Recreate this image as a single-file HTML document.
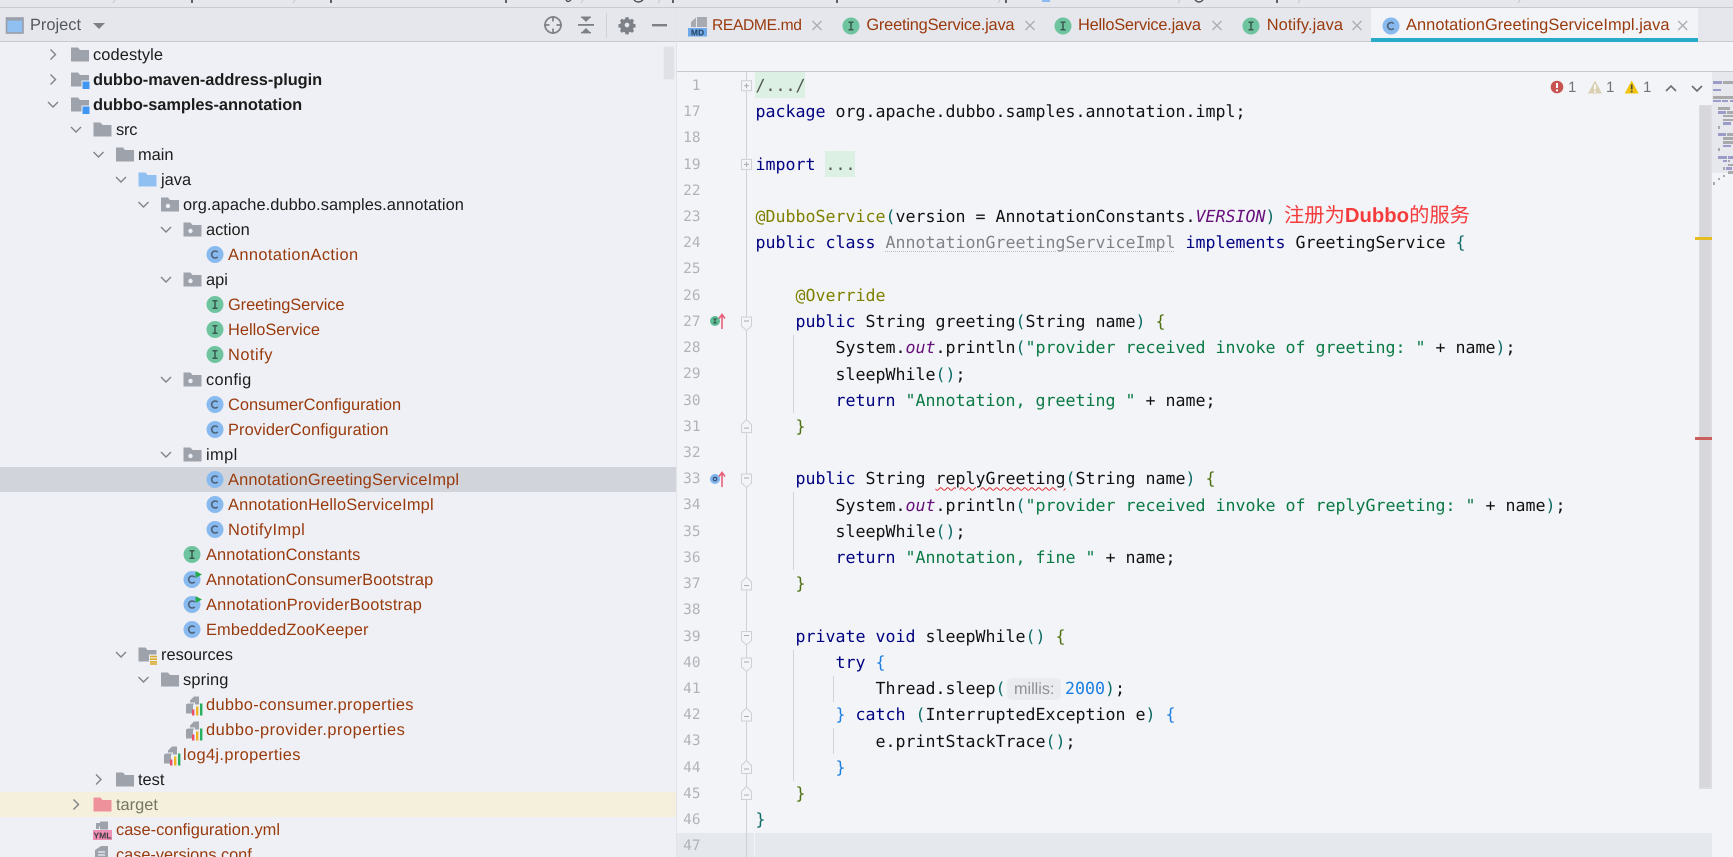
<!DOCTYPE html>
<html lang="en">
<head>
<meta charset="utf-8">
<title>AnnotationGreetingServiceImpl.java</title>
<style>
html,body{margin:0;padding:0;width:1733px;height:857px;overflow:hidden;background:#f2f4f8}
body{position:relative;font-family:"Liberation Sans","Noto Sans CJK SC",sans-serif;text-rendering:geometricPrecision}
.box{position:absolute}
.t{position:absolute;height:25px;line-height:25px;font-size:16.4px;white-space:pre;color:#1c1c1c;margin-top:1px}
.o{color:#993a0d}
.b{font-weight:bold}
.tab{position:absolute;top:13px;height:25px;line-height:25px;font-size:16.4px;white-space:pre;color:#993a0d}
.c{position:absolute;left:755.5px;height:26.22px;line-height:26.22px;font-family:"DejaVu Sans Mono",monospace;font-size:16.62px;white-space:pre;color:#111;margin-top:.6px}
.n{position:absolute;right:1032.5px;height:26.22px;line-height:26.22px;font-family:"DejaVu Sans Mono",monospace;font-size:14.4px;color:#b0b3b8;margin-top:.4px}
.k{color:#000080}.s{color:#0b7a45}.a{color:#808000}.i{color:#660e7a;font-style:italic}
.p{color:#0e6b66}.g{color:#4f7010}.u{color:#1d7fe0}.d{color:#7f8287;text-decoration:underline dotted #b9bbbf 1px;text-underline-offset:3px}
.w{text-decoration:underline wavy #e03030 1px;text-underline-offset:2px}
</style>
</head>
<body>
<!-- backgrounds -->
<div class="box" style="left:0;top:0;width:1733px;height:7px;background:#e6e7ec"></div>
<div class="box" style="left:0;top:7px;width:1733px;height:1px;background:#c8cacf"></div>
<div class="box" style="left:0;top:8px;width:1733px;height:33px;background:#e6e7ec"></div>
<div class="box" style="left:0;top:41px;width:1733px;height:1px;background:#c8cacf"></div>
<div class="box" style="left:0;top:42px;width:676px;height:815px;background:#eff0f5"></div>
<div class="box" style="left:676px;top:8px;width:1px;height:849px;background:#e1e3e8"></div>
<div class="box" style="left:0;top:467px;width:676px;height:25px;background:#d1d5db"></div>
<div class="box" style="left:0;top:792px;width:676px;height:25px;background:#f4f0dc"></div>
<div class="box" style="left:663px;top:46px;width:12px;height:34px;background:#dfe1e6;border:1px solid #e9ebee;box-sizing:border-box"></div>
<div class="box" style="left:677px;top:71px;width:1056px;height:1px;background:#c8cacf"></div>
<div class="box" style="left:1371px;top:8px;width:327px;height:30px;background:#f2f4f8"></div>
<div class="box" style="left:1371px;top:38px;width:327px;height:4px;background:#28aac9"></div>
<div class="box" style="left:677px;top:833px;width:1035px;height:24px;background:#e5e9ed"></div>
<div class="box" style="left:1712px;top:72px;width:21px;height:101px;background:#e7e8ed"></div>
<div class="box" style="left:1699px;top:105px;width:13px;height:684px;background:#d6d6db;border:1px solid #dcdde1;border-right-width:2px;border-bottom-width:2px;box-sizing:border-box"></div>
<div class="box" style="left:1695px;top:237px;width:17px;height:3px;background:#e3bd22"></div>
<div class="box" style="left:1695px;top:437px;width:17px;height:3px;background:#c9605c"></div>
<!-- fold highlights -->
<div class="box" style="left:755px;top:72px;width:50px;height:26px;background:#dcf0e3"></div>
<div class="box" style="left:825px;top:151px;width:30px;height:26px;background:#dcf0e3"></div>
<!-- indent guides -->
<div class="box" style="left:793px;top:335px;width:1px;height:78px;background:#d2d4d8"></div>
<div class="box" style="left:793px;top:492px;width:1px;height:78px;background:#d2d4d8"></div>
<div class="box" style="left:793px;top:650px;width:1px;height:131px;background:#d2d4d8"></div>
<div class="box" style="left:833px;top:676px;width:1px;height:26px;background:#d2d4d8"></div>
<div class="box" style="left:833px;top:728px;width:1px;height:26px;background:#d2d4d8"></div>
<div class="box" style="left:746px;top:72px;width:1px;height:785px;background:#ced1d5"></div>
<div class="box" style="left:754px;top:833px;width:1px;height:24px;background:#f2f4f8"></div>
<div class="box" style="left:1007px;top:678px;width:54px;height:22px;border-radius:5px;background:#e9ebef"></div>

<!-- icons layer -->
<svg class="box" style="left:0;top:0" width="1733" height="857" viewBox="0 0 1733 857" xmlns="http://www.w3.org/2000/svg">
<defs>
<g id="cr"><path d="M-2.5 -5L2.5 0L-2.5 5" fill="none" stroke="#7f8287" stroke-width="1.4"/></g>
<g id="cd"><path d="M-5 -2.5L0 2.5L5 -2.5" fill="none" stroke="#7f8287" stroke-width="1.4"/></g>
<g id="f"><path d="M0 2H7L9 4.5H18V16H0z" fill="#9ea2ab"/></g>
<g id="jf"><path d="M0 2H7L9 4.5H18V16H0z" fill="#90bff2"/></g>
<g id="tf"><path d="M0 2H7L9 4.5H18V16H0z" fill="#ee919a"/></g>
<g id="pk"><use href="#f"/><circle cx="7" cy="10.5" r="2.2" fill="#eff0f5"/></g>
<g id="m"><use href="#f"/><rect x="10.5" y="10" width="8" height="8.5" fill="#eff0f5"/><rect x="11.5" y="11" width="7" height="7.5" fill="#3f97f2"/></g>
<g id="res"><use href="#f"/><rect x="10.5" y="9" width="8" height="10" fill="#eff0f5"/><path d="M11.5 11h7M11.5 13.7h7M11.5 16.4h7M11.5 18.5h7" stroke="#d9a92a" stroke-width="1.6"/></g>
<g id="cl"><circle cx="8.5" cy="9" r="8.5" fill="#88baf0"/><path d="M11.2 6.6A3.5 3.5 0 1 0 11.2 11.4" fill="none" stroke="#4e6278" stroke-width="1.6"/></g>
<g id="in"><circle cx="8.5" cy="9" r="8.5" fill="#6fc4a0"/><path d="M6 5.2h5M8.5 5.2v7.6M6 12.8h5" fill="none" stroke="#3a5a4e" stroke-width="1.5"/></g>
<g id="run"><use href="#cl"/><path d="M12 0.5L18.5 4L12 7.5z" fill="#25a94f"/></g>
<g id="prop"><path d="M1 9V18H9V8H3z" fill="#9ea2ab"/><path d="M5 5L9 1H10V7H5z" fill="#9ea2ab"/><path d="M10 1h4v8h-4z" fill="#9ea2ab"/><rect x="8" y="9" width="11" height="11" fill="#eff0f5"/><rect x="7" y="14" width="2.4" height="6" fill="#e8506a"/><rect x="11" y="11" width="2.4" height="9" fill="#eeb422"/><rect x="15" y="8" width="2.4" height="12" fill="#27ae60"/></g>
<g id="x"><path d="M-4.5 -4.5L4.5 4.5M4.5 -4.5L-4.5 4.5" stroke="#a9acb1" stroke-width="1.3"/></g>
<g id="fo"><path d="M-5 -5H5V4L0 8.5L-5 4z" fill="#f2f4f8" stroke="#cdd0d4"/><path d="M-2.5 -1H2.5" stroke="#a9acb1"/></g>
<g id="fc"><path d="M-5 -2L0 -7L5 -2V6H-5z" fill="#f2f4f8" stroke="#cdd0d4"/><path d="M-2.5 1.5H2.5" stroke="#a9acb1"/></g>
<g id="fp"><rect x="-5" y="-5" width="10" height="10" fill="#f2f4f8" stroke="#cdd0d4"/><path d="M-2.5 0H2.5M0 -2.5V2.5" stroke="#a9acb1"/></g>
</defs>

<!-- top strip cut off glyph remnants -->
<path d="M115 0L113 3M295 0L293 3M583 0L581 3M660 0L658 3M1000 0L998 3M1180 0L1178 3M1300 0L1298 3M1520 0L1518 3" stroke="#c3c5ca" stroke-width="1"/>
<path d="M192 0V3M331 0V3M506 0V3M673 0V3M837 0V3M1006 0V3M1277 0V3" stroke="#333" stroke-width="1.5"/>
<path d="M566 0Q568 3 571 0M634 0Q638 4 643 0M1195 0Q1199 4 1203 0" fill="none" stroke="#444" stroke-width="1.2"/>
<rect x="1042" y="0" width="8" height="2" fill="#8dbdf0"/>

<!-- project header -->
<rect x="6.5" y="18" width="16.5" height="15" fill="#90bff2" stroke="#9a9ea6" stroke-width="1.6"/>
<path d="M7 19h15v1.6H7z" fill="#9a9ea6"/>
<path d="M93 23H105L99 29z" fill="#7c8086"/>
<g fill="none" stroke="#7d8187" stroke-width="1.7"><circle cx="553" cy="25" r="8"/><path d="M553 16V21.5M553 28.5V34M544 25H549.5M556.5 25H562"/></g>
<g fill="#7d8187"><rect x="578" y="24" width="16" height="1.8"/><path d="M581.5 17.5H590.5L586 22z"/><path d="M581.5 32.5H590.5L586 28z"/><rect x="581" y="16.5" width="10" height="1.4"/><rect x="581" y="32" width="10" height="1.4"/></g>
<rect x="606" y="13" width="1" height="25" fill="#d0d2d6"/>
<path fill="#7d8187" fill-rule="evenodd" transform="translate(627 25) scale(.78) translate(-627 -27)" d="M625 17h4l.5 2.5 1.8.8 2.2-1.4 2.6 2.6-1.4 2.2.8 1.8 2.5.5v4l-2.5.5-.8 1.8 1.4 2.2-2.6 2.6-2.2-1.4-1.8.8-.5 2.5h-4l-.5-2.5-1.8-.8-2.2 1.4-2.6-2.6 1.4-2.2-.8-1.8-2.5-.5v-4l2.5-.5.8-1.8-1.4-2.2 2.6-2.6 2.2 1.4 1.8-.8zM627 24a3 3 0 1 0 .01 0z"/>
<rect x="652" y="24" width="15" height="2.4" fill="#7d8187"/>

<!-- tree chevrons -->
<use href="#cr" x="53" y="54.5"/>
<use href="#cr" x="53" y="79.5"/>
<use href="#cd" x="53" y="104.5"/>
<use href="#cd" x="76" y="129.5"/>
<use href="#cd" x="98.5" y="154.5"/>
<use href="#cd" x="121" y="179.5"/>
<use href="#cd" x="143.5" y="204.5"/>
<use href="#cd" x="166" y="229.5"/>
<use href="#cd" x="166" y="279.5"/>
<use href="#cd" x="166" y="379.5"/>
<use href="#cd" x="166" y="454.5"/>
<use href="#cd" x="121" y="654.5"/>
<use href="#cd" x="143.5" y="679.5"/>
<use href="#cr" x="98.5" y="779.5"/>
<use href="#cr" x="76" y="804.5"/>

<!-- tree icons -->
<use href="#f" x="71" y="45.5"/>
<use href="#m" x="71" y="70.5"/>
<use href="#m" x="71" y="95.5"/>
<use href="#f" x="93.5" y="120.5"/>
<use href="#f" x="116" y="145.5"/>
<use href="#jf" x="138.5" y="170.5"/>
<use href="#pk" x="161" y="195.5"/>
<use href="#pk" x="183.5" y="220.5"/>
<use href="#cl" x="206.5" y="245.5"/>
<use href="#pk" x="183.5" y="270.5"/>
<use href="#in" x="206.5" y="295.5"/>
<use href="#in" x="206.5" y="320.5"/>
<use href="#in" x="206.5" y="345.5"/>
<use href="#pk" x="183.5" y="370.5"/>
<use href="#cl" x="206.5" y="395.5"/>
<use href="#cl" x="206.5" y="420.5"/>
<use href="#pk" x="183.5" y="445.5"/>
<use href="#cl" x="206.5" y="470.5"/>
<use href="#cl" x="206.5" y="495.5"/>
<use href="#cl" x="206.5" y="520.5"/>
<use href="#in" x="183.5" y="545.5"/>
<use href="#run" x="183.5" y="570.5"/>
<use href="#run" x="183.5" y="595.5"/>
<use href="#cl" x="183.5" y="620.5"/>
<use href="#res" x="138.5" y="645.5"/>
<use href="#f" x="161" y="670.5"/>
<use href="#prop" x="185" y="695.5"/>
<use href="#prop" x="185" y="720.5"/>
<use href="#prop" x="163" y="745.5"/>
<use href="#f" x="116" y="770.5"/>
<use href="#tf" x="93.5" y="795.5"/>
<!-- yml -->
<path d="M96 829V823H103L99 827V829z" fill="#9ea2ab"/><rect x="100" y="821.5" width="8" height="8" fill="#9ea2ab"/>
<rect x="93" y="830" width="19" height="10" fill="#f08fb6"/>
<text x="102.5" y="838.5" text-anchor="middle" font-family="Liberation Sans, sans-serif" font-size="8.5" font-weight="bold" fill="#3b3b3b">YML</text>
<!-- conf -->
<path d="M95 857V850L101 846H108V857z" fill="#9ea2ab"/><path d="M98 852H105M98 855H105" stroke="#eff0f5" stroke-width="1.2"/>

<!-- tab icons -->
<path d="M691 27V22L696 17.5V27z" fill="#a7aab0"/><rect x="697" y="17" width="10" height="10" fill="#a7aab0"/>
<rect x="688" y="28" width="19" height="8.5" fill="#6fa9ea"/>
<text x="697.5" y="35.5" text-anchor="middle" font-family="Liberation Sans, sans-serif" font-size="8.5" font-weight="bold" fill="#24405c">MD</text>
<use href="#in" x="842.5" y="17"/>
<use href="#in" x="1054.5" y="17"/>
<use href="#in" x="1242.5" y="17"/>
<use href="#cl" x="1382.5" y="17"/>
<use href="#x" x="817" y="25.5"/>
<use href="#x" x="1030" y="25.5"/>
<use href="#x" x="1217" y="25.5"/>
<use href="#x" x="1357" y="25.5"/>
<use href="#x" x="1682.7" y="25.5"/>

<!-- inspections -->
<circle cx="1557" cy="87" r="6.3" fill="#c75450"/><path d="M1557 83V88" stroke="#fff" stroke-width="2"/><circle cx="1557" cy="90.4" r="1.1" fill="#fff"/>
<path d="M1595 80.5L1602 93.5H1588z" fill="#d9d0b3"/><path d="M1595 84.5V89.5M1595 90.7V92.4" stroke="#fff" stroke-width="1.7"/>
<path d="M1631.7 80.5L1638.7 93.5H1624.7z" fill="#f2c40f"/><path d="M1631.7 84.5V89.5M1631.7 90.7V92.4" stroke="#4b4b3b" stroke-width="1.7"/>
<path d="M1666 91L1671 86L1676 91M1692 86L1697 91L1702 86" fill="none" stroke="#6a6e73" stroke-width="1.6"/>

<!-- gutter icons -->
<circle cx="715" cy="321" r="5" fill="#5fbb95"/><path d="M713.3 319H716.7M715 319V323M713.3 323H716.7" stroke="#2c4a3f" stroke-width="1"/>
<path d="M722 329V315M719 318.5L722 314.5L725 318.5" fill="none" stroke="#e8607a" stroke-width="1.6"/>
<circle cx="715" cy="479" r="5" fill="#7fb3ee"/><circle cx="715" cy="479" r="1.8" fill="none" stroke="#2c3f55" stroke-width="1"/>
<path d="M722 487V473M719 476.5L722 472.5L725 476.5" fill="none" stroke="#e8607a" stroke-width="1.6"/>

<!-- fold marks -->
<use href="#fp" x="746.5" y="85.7"/>
<use href="#fp" x="746.5" y="164.4"/>
<use href="#fo" x="746.5" y="322"/>
<use href="#fc" x="746.5" y="426.6"/>
<use href="#fo" x="746.5" y="479"/>
<use href="#fc" x="746.5" y="584"/>
<use href="#fo" x="746.5" y="636.5"/>
<use href="#fo" x="746.5" y="663"/>
<use href="#fc" x="746.5" y="715"/>
<use href="#fc" x="746.5" y="767.5"/>
<use href="#fc" x="746.5" y="793.5"/>

<!-- minimap -->
<g fill="#9c9cc9">
<rect x="1713" y="81" width="9" height="3"/><rect x="1713" y="89" width="8" height="2"/>
<rect x="1713" y="100" width="8" height="2"/><rect x="1722" y="100" width="6" height="2"/><rect x="1730" y="100" width="3" height="2"/>
<rect x="1718" y="111" width="8" height="3"/><rect x="1723" y="122" width="8" height="3"/>
<rect x="1718" y="133" width="8" height="3"/><rect x="1723" y="145" width="8" height="2"/>
<rect x="1718" y="156" width="9" height="3"/><rect x="1728" y="156" width="5" height="3"/>
<rect x="1723" y="160" width="4" height="2"/><rect x="1726" y="167" width="6" height="3"/>
</g>
<g fill="#a9a9ab">
<rect x="1723" y="81" width="10" height="3"/><rect x="1713" y="96" width="20" height="3"/>
<rect x="1718" y="107" width="12" height="3"/><rect x="1727" y="111" width="6" height="3"/>
<rect x="1723" y="115" width="10" height="2"/><rect x="1723" y="119" width="10" height="2"/>
<rect x="1718" y="126" width="2" height="3"/><rect x="1727" y="133" width="6" height="3"/>
<rect x="1723" y="137" width="10" height="3"/><rect x="1723" y="141" width="10" height="3"/>
<rect x="1718" y="148" width="2" height="3"/><rect x="1728" y="160" width="2" height="2"/>
<rect x="1728" y="164" width="5" height="2"/><rect x="1723" y="167" width="2" height="3"/>
<rect x="1728" y="171" width="5" height="3"/><rect x="1723" y="175" width="2" height="2"/>
<rect x="1718" y="178" width="2" height="2"/><rect x="1713" y="182" width="2" height="3"/>
</g>
</svg>

<!-- header text -->
<div class="t" style="left:30px;top:12px;color:#54585f">Project</div>

<!-- tabs -->
<div class="tab" style="left:712px;font-size:15.6px;letter-spacing:-.35px">README.md</div>
<div class="tab" style="left:866.4px;letter-spacing:-.21px">GreetingService.java</div>
<div class="tab" style="left:1078px;letter-spacing:-.23px">HelloService.java</div>
<div class="tab" style="left:1266.7px;letter-spacing:.1px">Notify.java</div>
<div class="tab" style="left:1406px;letter-spacing:.06px">AnnotationGreetingServiceImpl.java</div>

<!-- tree -->
<div class="t" style="left:93px;top:42px;letter-spacing:.1px">codestyle</div>
<div class="t b" style="left:93px;top:67px;letter-spacing:-.05px">dubbo-maven-address-plugin</div>
<div class="t b" style="left:93px;top:92px;letter-spacing:-.05px">dubbo-samples-annotation</div>
<div class="t" style="left:116px;top:117px;letter-spacing:-.2px">src</div>
<div class="t" style="left:138px;top:142px">main</div>
<div class="t" style="left:161px;top:167px">java</div>
<div class="t" style="left:183px;top:192px;letter-spacing:.06px">org.apache.dubbo.samples.annotation</div>
<div class="t" style="left:206px;top:217px">action</div>
<div class="t o" style="left:228px;top:242px;letter-spacing:.41px">AnnotationAction</div>
<div class="t" style="left:206px;top:267px">api</div>
<div class="t o" style="left:228px;top:292px;letter-spacing:-.07px">GreetingService</div>
<div class="t o" style="left:228px;top:317px">HelloService</div>
<div class="t o" style="left:228px;top:342px;letter-spacing:.5px">Notify</div>
<div class="t" style="left:206px;top:367px;letter-spacing:.3px">config</div>
<div class="t o" style="left:228px;top:392px">ConsumerConfiguration</div>
<div class="t o" style="left:228px;top:417px;letter-spacing:.1px">ProviderConfiguration</div>
<div class="t" style="left:206px;top:442px;letter-spacing:.4px">impl</div>
<div class="t o" style="left:228px;top:467px;letter-spacing:.15px">AnnotationGreetingServiceImpl</div>
<div class="t o" style="left:228px;top:492px;letter-spacing:.17px">AnnotationHelloServiceImpl</div>
<div class="t o" style="left:228px;top:517px;letter-spacing:.44px">NotifyImpl</div>
<div class="t o" style="left:206px;top:542px;letter-spacing:.12px">AnnotationConstants</div>
<div class="t o" style="left:206px;top:567px;letter-spacing:.12px">AnnotationConsumerBootstrap</div>
<div class="t o" style="left:206px;top:592px;letter-spacing:.24px">AnnotationProviderBootstrap</div>
<div class="t o" style="left:206px;top:617px;letter-spacing:.13px">EmbeddedZooKeeper</div>
<div class="t" style="left:161px;top:642px">resources</div>
<div class="t" style="left:183px;top:667px;letter-spacing:.15px">spring</div>
<div class="t o" style="left:206px;top:692px;letter-spacing:.33px">dubbo-consumer.properties</div>
<div class="t o" style="left:206px;top:717px;letter-spacing:.5px">dubbo-provider.properties</div>
<div class="t o" style="left:183px;top:742px;letter-spacing:.36px">log4j.properties</div>
<div class="t" style="left:138px;top:767px">test</div>
<div class="t" style="left:116px;top:792px;color:#75765f">target</div>
<div class="t o" style="left:116px;top:817px">case-configuration.yml</div>
<div class="t o" style="left:116px;top:842px;letter-spacing:-.05px">case-versions.conf</div>

<!-- line numbers -->
<div class="n" style="top:72.6px">1</div>
<div class="n" style="top:98.8px">17</div>
<div class="n" style="top:125px">18</div>
<div class="n" style="top:151.3px">19</div>
<div class="n" style="top:177.5px">22</div>
<div class="n" style="top:203.7px">23</div>
<div class="n" style="top:229.9px">24</div>
<div class="n" style="top:256.1px">25</div>
<div class="n" style="top:282.4px">26</div>
<div class="n" style="top:308.6px">27</div>
<div class="n" style="top:334.8px">28</div>
<div class="n" style="top:361px">29</div>
<div class="n" style="top:387.2px">30</div>
<div class="n" style="top:413.5px">31</div>
<div class="n" style="top:439.7px">32</div>
<div class="n" style="top:465.9px">33</div>
<div class="n" style="top:492.1px">34</div>
<div class="n" style="top:518.3px">35</div>
<div class="n" style="top:544.6px">36</div>
<div class="n" style="top:570.8px">37</div>
<div class="n" style="top:597px">38</div>
<div class="n" style="top:623.2px">39</div>
<div class="n" style="top:649.4px">40</div>
<div class="n" style="top:675.7px">41</div>
<div class="n" style="top:701.9px">42</div>
<div class="n" style="top:728.1px">43</div>
<div class="n" style="top:754.3px">44</div>
<div class="n" style="top:780.5px">45</div>
<div class="n" style="top:806.8px">46</div>
<div class="n" style="top:833px">47</div>

<!-- code -->
<div class="c" style="top:72.6px;color:#555">/.../</div>
<div class="c" style="top:98.8px"><span class="k">package</span> org.apache.dubbo.samples.annotation.impl;</div>
<div class="c" style="top:151.3px"><span class="k">import</span> <span style="color:#555">...</span></div>
<div class="c" style="top:203.7px"><span class="a">@DubboService</span><span class="p">(</span>version = AnnotationConstants.<span class="i">VERSION</span><span class="p">)</span></div>
<div class="c" style="top:229.9px"><span class="k">public class</span> <span class="d">AnnotationGreetingServiceImpl</span> <span class="k">implements</span> GreetingService <span class="p">{</span></div>
<div class="c" style="top:282.4px">    <span class="a">@Override</span></div>
<div class="c" style="top:308.6px">    <span class="k">public</span> String greeting<span class="p">(</span>String name<span class="p">)</span> <span class="g">{</span></div>
<div class="c" style="top:334.8px">        System.<span class="i">out</span>.println<span class="p">(</span><span class="s">"provider received invoke of greeting: "</span> + name<span class="p">)</span>;</div>
<div class="c" style="top:361px">        sleepWhile<span class="p">()</span>;</div>
<div class="c" style="top:387.2px">        <span class="k">return</span> <span class="s">"Annotation, greeting "</span> + name;</div>
<div class="c" style="top:413.5px">    <span class="g">}</span></div>
<div class="c" style="top:465.9px">    <span class="k">public</span> String <span class="w">replyGreeting</span><span class="p">(</span>String name<span class="p">)</span> <span class="g">{</span></div>
<div class="c" style="top:492.1px">        System.<span class="i">out</span>.println<span class="p">(</span><span class="s">"provider received invoke of replyGreeting: "</span> + name<span class="p">)</span>;</div>
<div class="c" style="top:518.3px">        sleepWhile<span class="p">()</span>;</div>
<div class="c" style="top:544.6px">        <span class="k">return</span> <span class="s">"Annotation, fine "</span> + name;</div>
<div class="c" style="top:570.8px">    <span class="g">}</span></div>
<div class="c" style="top:623.2px">    <span class="k">private void</span> sleepWhile<span class="p">()</span> <span class="g">{</span></div>
<div class="c" style="top:649.4px">        <span class="k">try</span> <span class="u">{</span></div>
<div class="c" style="top:675.7px">            Thread.sleep<span class="p">(</span></div>
<div class="box" style="left:1014px;top:678px;height:22px;line-height:22px;font-size:16.2px;color:#8e9196">millis:</div>
<div class="c" style="top:675.7px;left:1065px"><span class="u">2000</span><span class="p">)</span>;</div>
<div class="c" style="top:701.9px">        <span class="u">}</span> <span class="k">catch</span> <span class="p">(</span>InterruptedException e<span class="p">)</span> <span class="u">{</span></div>
<div class="c" style="top:728.1px">            e.printStackTrace<span class="p">()</span>;</div>
<div class="c" style="top:754.3px">        <span class="u">}</span></div>
<div class="c" style="top:780.5px">    <span class="g">}</span></div>
<div class="c" style="top:806.8px"><span class="p">}</span></div>

<div class="box" style="left:1284px;top:202px;height:28px;line-height:28px;font-size:20.3px;white-space:pre;color:#f53c3c">注册为<b>Dubbo</b>的服务</div>

<div class="box" style="left:1568px;top:78px;height:20px;line-height:20px;font-size:15px;color:#70757a">1</div>
<div class="box" style="left:1606px;top:78px;height:20px;line-height:20px;font-size:15px;color:#70757a">1</div>
<div class="box" style="left:1643px;top:78px;height:20px;line-height:20px;font-size:15px;color:#70757a">1</div>
</body>
</html>
